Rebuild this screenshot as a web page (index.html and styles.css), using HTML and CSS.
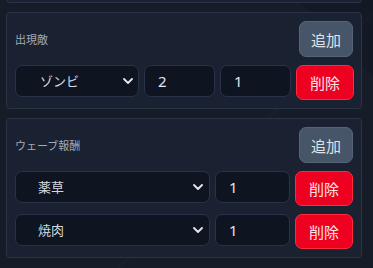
FILE: index.html
```html
<!DOCTYPE html>
<html lang="ja">
  <head>
    <meta charset="UTF-8" />
    <meta name="viewport" content="width=device-width, initial-scale=1.0" />
    <title>ウェーブ設定</title>
    <link rel="stylesheet" href="styles.css">
  </head>
  <body>
    <div class="panel-list">
      <div class="panel panel-prev"></div>

      <div class="panel">
        <div class="panel-head">
          <span class="panel-title">出現敵</span>
          <button class="btn btn-add">追加</button>
        </div>
        <div class="row row-enemy">
          <select class="field select">
            <option>ゾンビ</option>
          </select>
          <input class="field" type="text" value="2" />
          <input class="field" type="text" value="1" />
          <button class="btn btn-delete">削除</button>
        </div>
      </div>

      <div class="panel">
        <div class="panel-head">
          <span class="panel-title">ウェーブ報酬</span>
          <button class="btn btn-add">追加</button>
        </div>
        <div class="row row-reward">
          <select class="field select">
            <option>薬草</option>
          </select>
          <input class="field" type="text" value="1" />
          <button class="btn btn-delete">削除</button>
        </div>
        <div class="row row-reward">
          <select class="field select">
            <option>焼肉</option>
          </select>
          <input class="field" type="text" value="1" />
          <button class="btn btn-delete">削除</button>
        </div>
      </div>
    </div>
  </body>
</html>
```

FILE: styles.css
```css
:root {
  --background-color: #161d29;
  --panel-color: #1a2130;
  --panel-border: #2b3446;
  --field-color: #0f1421;
  --field-border: #29324a;
  --text-color: #e3e7ee;
  --muted-color: #a2a9b5;
  --add-color: #475569;
  --delete-color: #ee0020;
}

* {
  box-sizing: border-box;
}

body {
  margin: 0;
  height: 268px;
  overflow: hidden;
  background-color: var(--background-color);
  background-image:
    linear-gradient(135deg, transparent 60%, rgba(255, 255, 255, 0.02) 60.2%, transparent 60.6%),
    linear-gradient(45deg, transparent 88%, rgba(0, 0, 0, 0.12) 88%);
  color: var(--text-color);
  font-family: "Noto Sans", "Noto Sans CJK JP", sans-serif;
}

.panel-list {
  display: flex;
  flex-direction: column;
  gap: 9px;
  padding: 0 11px 0 6px;
  margin-top: -40px;
}

.panel {
  background-color: var(--panel-color);
  border: 1px solid var(--panel-border);
  border-radius: 4px;
  padding: 8px;
  display: flex;
  flex-direction: column;
  gap: 8px;
}

.panel-prev {
  height: 43px;
}

.panel-head {
  display: flex;
  justify-content: space-between;
  align-items: center;
}

.panel-title {
  font-size: 11px;
  color: var(--muted-color);
}

.row {
  display: grid;
  gap: 5px;
  align-items: start;
}

.row-enemy {
  grid-template-columns: 124px 71px 71px 58px;
  gap: 4px 5px;
}

.row-reward {
  grid-template-columns: 195px 75px 58px;
}

.field {
  height: 32px;
  width: 100%;
  background-color: var(--field-color);
  border: 1px solid var(--field-border);
  border-radius: 7px;
  color: var(--text-color);
  font-family: inherit;
  font-size: 15px;
  padding: 0 12px 0 13px;
  outline: none;
}

.select {
  appearance: none;
  -webkit-appearance: none;
  padding-left: 24px;
  font-size: 13px;
  color: #d4d8df;
  background-image: url("data:image/svg+xml,%3Csvg xmlns='http://www.w3.org/2000/svg' width='10' height='6' viewBox='0 0 10 6'%3E%3Cpath d='M1 1l4 4 4-4' fill='none' stroke='%23e3e7ee' stroke-width='1.8' stroke-linecap='round' stroke-linejoin='round'/%3E%3C/svg%3E");
  background-repeat: no-repeat;
  background-position: right 5px center;
}

.row-reward .select {
  padding-left: 22px;
  background-position: right 6px center;
}

.btn {
  border: none;
  border-radius: 7px;
  font-family: inherit;
  font-size: 15px;
  cursor: pointer;
}

.btn-add {
  width: 54px;
  height: 36px;
  background-color: var(--add-color);
  color: #dfe3ea;
  border: 1px solid #56647a;
}

.btn-delete {
  width: 58px;
  height: 35px;
  background-color: var(--delete-color);
  color: #fde4e6;
  border: 1px solid #ff2a3e;
}
```
